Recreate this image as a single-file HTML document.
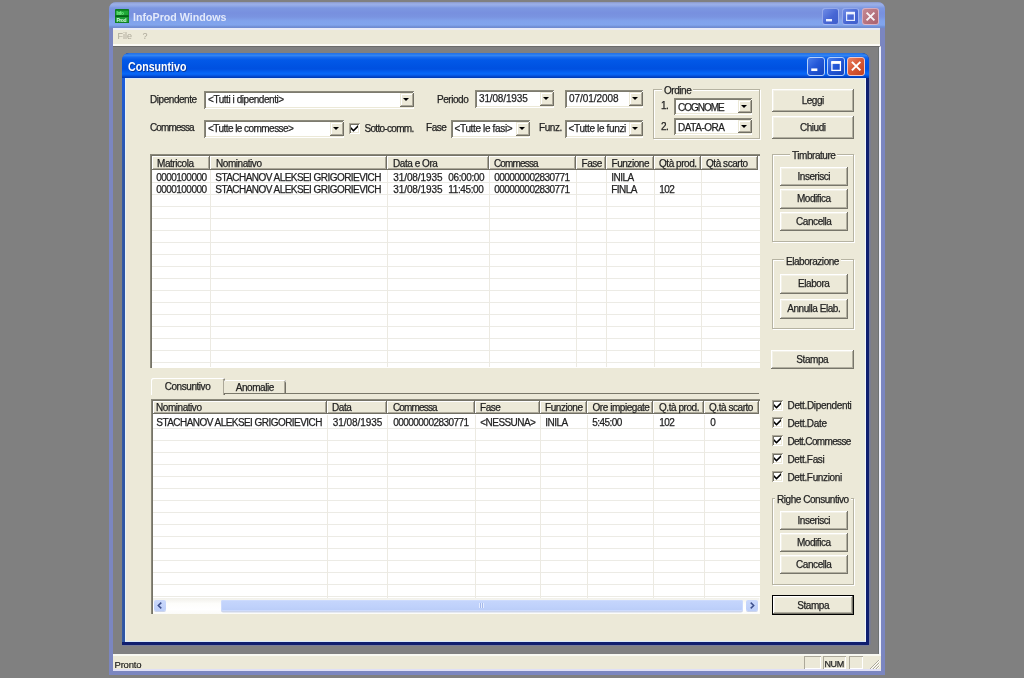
<!DOCTYPE html>
<html lang="it">
<head>
<meta charset="utf-8">
<title>InfoProd Windows - Consuntivo</title>
<style>
*{box-sizing:border-box;margin:0;padding:0}
html,body{width:1024px;height:678px;overflow:hidden;background:#808080}
body{position:relative;font-family:"Liberation Sans",sans-serif;font-size:10px;color:#1a1a1a;letter-spacing:-0.45px;line-height:12px;-webkit-text-stroke:0.25px #2a2a2a}
.a{position:absolute;white-space:nowrap}
/* outer window */
#ow{left:109px;top:2px;width:775.6px;height:672.7px;background:#7b86c0;border-radius:7px 7px 0 0}
#ot{left:109px;top:2px;width:775.6px;height:26px;border-radius:7px 7px 0 0;background:linear-gradient(#8a98c8 0,#9bb0e8 2px,#90a8e6 4px,#7c97e1 6px,#7890df 11px,#7a94e1 15px,#80a3ec 19px,#81a5ed 23px,#6f8cd2 25px,#6f8cd2 26px)}
#otx{-webkit-text-stroke:0;left:132.5px;top:10px;font-size:11.5px;font-weight:bold;color:#e3e9fb;letter-spacing:0;line-height:14px;transform:scaleX(0.927);transform-origin:0 0}
#menu{left:113px;top:28px;width:767px;height:18px;background:#ece9d8;border-top:2px solid #e9ecf7;border-bottom:2px solid #fbfaf5}
#mdi{left:113px;top:46px;width:768px;height:608px;background:#808081;border-top:1px solid #6a6a6a;border-right:2px solid #eef0fb;box-shadow:inset -1px 0 0 #6e7272}
#sb{left:113px;top:653.7px;width:768px;height:17px;background:#ece9d8;border-top:2px solid #f8f8f1;border-bottom:2px solid #dfdff6}
.mi{-webkit-text-stroke:0;color:#aca899;font-size:9px;top:30.2px;letter-spacing:0}
/* inner window */
#iw{left:121.5px;top:53px;width:747.5px;height:592.2px;background:linear-gradient(to bottom,#1a5cdc 25px,rgba(26,92,220,0) 120px) 0 0/4px 100% no-repeat,linear-gradient(to top,#0f1e6e 3.4px,rgba(15,30,110,0) 3.4px),linear-gradient(to right,#3a5fa8 0,#2f55a2 1px,#2f55a2 4px,#0f1e6e 4px);border-radius:7px 7px 0 0;box-shadow:2px 0 0 -0.5px rgba(112,120,170,.75),0 1.5px 0 -0.5px rgba(112,120,170,.6)}
#it{left:121.5px;top:53px;width:747.5px;height:25px;border-radius:7px 7px 0 0;background:linear-gradient(#2a6ee0 0,#2478ee 1px,#3384f2 2.5px,#1568ee 4.5px,#0359e8 7px,#0054e3 12px,#0050e0 16px,#0560f2 19px,#0868f8 21px,#0550dc 23px,#0040c0 24px,#003cb8 25px)}
#itx{-webkit-text-stroke:0;left:128px;top:60px;font-size:12.5px;font-weight:bold;color:#fff;letter-spacing:0;line-height:14px;text-shadow:1px 1px 0 rgba(10,36,106,.65);transform:scaleX(0.85);transform-origin:0 0}
#ic{left:125.4px;top:78px;width:740.8px;height:563.7px;background:#ece9d8;border-top:1.6px solid #dce8f8;border-left:1.7px solid #e6f2f8;border-right:1.2px solid #f2f7ff;border-bottom:1.8px solid #d8e8fa}
/* caption buttons */
.cb{width:17px;height:17px;border-radius:3px;border:1px solid #fff}
.cbo{border-color:rgba(215,225,255,.55);background:linear-gradient(135deg,#6f8ce6,#4766d4 55%,#3f5fcc)}
.cbo.x{background:linear-gradient(135deg,#c58892,#a9606e);border-color:rgba(240,215,235,.6)}
.cbi{border-color:#b4d0fa;background:linear-gradient(135deg,#4a7eec,#2458d8 45%,#1443bc)}
.cbi.x{border-color:#f0c8c8;background:linear-gradient(135deg,#ea8466,#d85a38 45%,#c4401e)}
.cb svg{position:absolute;left:0;top:0;width:15px;height:15px}
/* controls */
.sunk{background:#fff;box-shadow:inset 1px 1px 0 #8b897b,inset -1px -1px 0 #fff,inset 2px 2px 0 #7d7b6f,inset -2px -2px 0 #ece9d8}
.btn{background:#ece9d8;text-align:center;box-shadow:inset -1px -1px 0 #77756a,inset 1px 1px 0 #fff,inset -2px -2px 0 #b2afa0,inset 2px 2px 0 #f3f1e7}
.btn.def{border:1px solid #000}
.dd{background:#ece9d8;width:14px;box-shadow:inset -1px -1px 0 #716f64,inset 1px 1px 0 #ece9d8,inset -2px -2px 0 #aca899,inset 2px 2px 0 #fff}
.dd:after{content:"";position:absolute;left:3.4px;top:5.3px;border:3.6px solid transparent;border-top:3.9px solid #000;border-bottom:0}
.grp{border:1px solid #b6b3a2;box-shadow:1px 1px 0 #fff,inset 1px 1px 0 #fff}
.gl{background:#ece9d8;padding:0 2px;margin-top:0.6px}
.chk{width:11px;height:11px;background:#fff;box-shadow:inset 1px 1px 0 #aca899,inset -1px -1px 0 #fff,inset 2px 2px 0 #716f64,inset -2px -2px 0 #ece9d8}
.chk svg{position:absolute;left:2px;top:2px;width:7px;height:7px}
/* grids */
.grid{background-color:#fff;box-shadow:inset 1px 1px 0 #8b897b,inset 2px 2px 0 #757367,inset -1px -1px 0 #fbfaf6}
.rows{background-image:repeating-linear-gradient(#fff 0,#fff 11px,#ecebe5 11px,#ecebe5 12px)}
.hd{background:#ece9d8;height:13.5px;line-height:15.5px;padding-left:5px;box-shadow:inset -1px -1px 0 #716f64,inset 1px 1px 0 #fff,inset -2px -2px 0 #aca899}
.vl{width:1px;background:#eceae2}
.tx{margin-top:0.5px;margin-left:0.3px;line-height:12px;letter-spacing:-0.55px}
</style>
</head>
<body><div id="root" style="position:absolute;left:0;top:0;width:1024px;height:678px;will-change:transform">
<!-- OUTER WINDOW -->
<div class="a" id="ow"></div>
<div class="a" id="ot"></div>
<div class="a" id="menu"></div>
<div class="a" id="mdi"></div>
<div class="a" id="sb"></div>
<svg class="a" style="left:114.8px;top:9.2px;width:14.2px;height:14.3px" viewBox="0 0 14 14"><rect width="14" height="14" rx="1" fill="#0c7a20"/><rect x="0.8" y="1.6" width="12.4" height="4.6" fill="#1fa838"/><rect x="0.8" y="6.2" width="12.4" height="1.6" fill="#076016"/><rect x="0.8" y="7.8" width="12.4" height="5.2" fill="#1a9c34"/><text x="1.6" y="5.8" font-size="4.6" font-weight="bold" fill="#7cf08c" font-family="Liberation Sans, sans-serif">Info</text><text x="1.4" y="12.4" font-size="5" font-weight="bold" fill="#d6fadc" font-family="Liberation Sans, sans-serif">Prod</text></svg>
<div class="a" id="otx">InfoProd Windows</div>
<div class="a mi" style="left:117.5px">File</div>
<div class="a mi" style="left:142.5px">?</div>
<div class="a cb cbo" style="left:822px;top:8px"><svg viewBox="0 0 15 15"><rect x="3" y="10" width="6" height="2.4" fill="#eef2ff"/></svg></div>
<div class="a cb cbo" style="left:842px;top:8px"><svg viewBox="0 0 15 15"><rect x="3.6" y="4" width="7.8" height="7.4" fill="none" stroke="#e6ecff" stroke-width="1.2"/><rect x="3" y="2.8" width="9" height="2.6" fill="#eef2ff"/></svg></div>
<div class="a cb cbo x" style="left:861.5px;top:8px"><svg viewBox="0 0 15 15"><path d="M3.6 3.6 L11.4 11.4 M11.4 3.6 L3.6 11.4" stroke="#f8f2f6" stroke-width="1.9" fill="none"/></svg></div>
<div class="a" style="left:114.5px;top:659px;font-size:9.5px;color:#111;letter-spacing:-0.2px;-webkit-text-stroke:0.15px #222">Pronto</div>
<div class="a" style="left:804px;top:656px;width:17px;height:13px;box-shadow:inset 1px 1px 0 #aca899,inset -1px -1px 0 #fff"></div>
<div class="a" style="left:823px;top:656px;width:23px;height:13px;box-shadow:inset 1px 1px 0 #aca899,inset -1px -1px 0 #fff;font-size:9px;line-height:16px;padding-left:1.5px;letter-spacing:-0.4px;color:#222">NUM</div>
<div class="a" style="left:849px;top:656px;width:14px;height:13px;box-shadow:inset 1px 1px 0 #aca899,inset -1px -1px 0 #fff"></div>
<svg class="a" style="left:868px;top:658px;width:12px;height:12px" viewBox="0 0 12 12"><path d="M11 2 L2 11 M11 5 L5 11 M11 8 L8 11" stroke="#aca899" stroke-width="1"/><path d="M12 2 L3 11 M12 5 L6 11 M12 8 L9 11" stroke="#fff" stroke-width="1"/></svg>
<!-- INNER WINDOW -->
<div class="a" id="iw"></div>
<div class="a" id="it"></div>
<div class="a" id="ic"></div>
<div class="a" id="itx">Consuntivo</div>
<div class="a cb cbi" style="left:807px;top:57.4px;width:18.3px;height:18.3px"><svg viewBox="0 0 15 15" style="width:16.3px;height:16.3px"><rect x="3" y="9.6" width="5.6" height="2.4" fill="#fff"/></svg></div>
<div class="a cb cbi" style="left:827px;top:57.4px;width:18.3px;height:18.3px"><svg viewBox="0 0 15 15" style="width:16.3px;height:16.3px"><rect x="3.6" y="4" width="7.8" height="7.4" fill="none" stroke="#fff" stroke-width="1.2"/><rect x="3" y="2.8" width="9" height="2.6" fill="#fff"/></svg></div>
<div class="a cb cbi x" style="left:846.5px;top:57.4px;width:18.3px;height:18.3px"><svg viewBox="0 0 15 15" style="width:16.3px;height:16.3px"><path d="M3.6 3.6 L11.4 11.4 M11.4 3.6 L3.6 11.4" stroke="#fff" stroke-width="1.85" fill="none"/></svg></div>
<div class="a" style="left:150px;top:94px">Dipendente</div>
<div class="a sunk" style="left:204px;top:91px;width:210px;height:18px;padding:3px 0 0 4px">&lt;Tutti i dipendenti&gt;</div>
<div class="a dd" style="left:399.5px;top:93px;height:14px"></div>
<div class="a" style="left:437px;top:94px">Periodo</div>
<div class="a sunk" style="left:475px;top:89.5px;width:79px;height:18px;padding:3px 0 0 4px;letter-spacing:-0.15px">31/08/1935</div>
<div class="a dd" style="left:539.5px;top:91.5px;height:14px"></div>
<div class="a sunk" style="left:565px;top:89.5px;width:78px;height:18px;padding:3px 0 0 4px;letter-spacing:-0.05px">07/01/2008</div>
<div class="a dd" style="left:628.5px;top:91.5px;height:14px"></div>
<div class="a" style="left:150px;top:122px;letter-spacing:-0.85px">Commessa</div>
<div class="a sunk" style="left:204px;top:119.5px;width:140px;height:18px;padding:3px 0 0 4px;letter-spacing:-0.55px">&lt;Tutte le commesse&gt;</div>
<div class="a dd" style="left:329.5px;top:121.5px;height:14px"></div>
<div class="a chk" style="left:349px;top:123px"><svg viewBox="0 0 7 7"><path d="M0 2 L2.5 4.5 L7 0 L7 2.2 L2.5 6.7 L0 4.2 Z" fill="#000"/></svg></div>
<div class="a" style="left:364.5px;top:123px;letter-spacing:-0.7px">Sotto-comm.</div>
<div class="a" style="left:426px;top:122px">Fase</div>
<div class="a sunk" style="left:451px;top:119.5px;width:79px;height:18px;padding:3px 0 0 3.5px;letter-spacing:-0.35px">&lt;Tutte le fasi&gt;</div>
<div class="a dd" style="left:515.5px;top:121.5px;height:14px"></div>
<div class="a" style="left:539px;top:122px">Funz.</div>
<div class="a sunk" style="left:565px;top:119.5px;width:78px;height:18px;padding:3px 0 0 3.5px;letter-spacing:-0.35px;overflow:hidden">&lt;Tutte le funzi</div>
<div class="a dd" style="left:628.5px;top:121.5px;height:14px"></div>
<div class="a grp" style="left:653px;top:89px;width:106.5px;height:49.5px"></div>
<div class="a gl" style="left:662px;top:84px">Ordine</div>
<div class="a" style="left:661px;top:100px">1.</div>
<div class="a sunk" style="left:674px;top:97.5px;width:78px;height:17px;padding:4px 0 0 4px;letter-spacing:-1px">COGNOME</div>
<div class="a dd" style="left:737.5px;top:99.5px;height:13px"></div>
<div class="a" style="left:661px;top:121px">2.</div>
<div class="a sunk" style="left:674px;top:118px;width:78px;height:17px;padding:4px 0 0 4px">DATA-ORA</div>
<div class="a dd" style="left:737.5px;top:120px;height:13px"></div>
<div class="a btn" style="left:771.5px;top:89.3px;width:82.5px;height:23.2px;line-height:24.5px">Leggi</div>
<div class="a btn" style="left:771.5px;top:116px;width:82.5px;height:23.3px;line-height:24.5px">Chiudi</div>
<div class="a grp" style="left:772px;top:154px;width:81.5px;height:87.5px"></div>
<div class="a gl" style="left:790px;top:149px">Timbrature</div>
<div class="a btn" style="left:779.5px;top:167px;width:68.5px;height:19px;line-height:20px">Inserisci</div>
<div class="a btn" style="left:779.5px;top:189px;width:68.5px;height:19.5px;line-height:20px">Modifica</div>
<div class="a btn" style="left:779.5px;top:211.5px;width:68.5px;height:19px;line-height:20px">Cancella</div>
<div class="a grp" style="left:772px;top:258.7px;width:81.5px;height:70.8px"></div>
<div class="a gl" style="left:784px;top:255px">Elaborazione</div>
<div class="a btn" style="left:779.5px;top:274px;width:68.5px;height:19.5px;line-height:20px">Elabora</div>
<div class="a btn" style="left:779.5px;top:299px;width:68.5px;height:19.5px;line-height:20px">Annulla Elab.</div>
<div class="a btn" style="left:771px;top:349.5px;width:82.5px;height:19.5px;line-height:20.5px">Stampa</div>
<div class="a chk" style="left:772px;top:400px"><svg viewBox="0 0 7 7"><path d="M0 2 L2.5 4.5 L7 0 L7 2.2 L2.5 6.7 L0 4.2 Z" fill="#000"/></svg></div><div class="a" style="left:787.5px;top:400px;letter-spacing:-0.33px">Dett.Dipendenti</div>
<div class="a chk" style="left:772px;top:417px"><svg viewBox="0 0 7 7"><path d="M0 2 L2.5 4.5 L7 0 L7 2.2 L2.5 6.7 L0 4.2 Z" fill="#000"/></svg></div><div class="a" style="left:787.5px;top:418px;letter-spacing:-0.35px">Dett.Date</div>
<div class="a chk" style="left:772px;top:435px"><svg viewBox="0 0 7 7"><path d="M0 2 L2.5 4.5 L7 0 L7 2.2 L2.5 6.7 L0 4.2 Z" fill="#000"/></svg></div><div class="a" style="left:787.5px;top:436px;letter-spacing:-0.65px">Dett.Commesse</div>
<div class="a chk" style="left:772px;top:453px"><svg viewBox="0 0 7 7"><path d="M0 2 L2.5 4.5 L7 0 L7 2.2 L2.5 6.7 L0 4.2 Z" fill="#000"/></svg></div><div class="a" style="left:787.5px;top:454px;letter-spacing:-0.35px">Dett.Fasi</div>
<div class="a chk" style="left:772px;top:471px"><svg viewBox="0 0 7 7"><path d="M0 2 L2.5 4.5 L7 0 L7 2.2 L2.5 6.7 L0 4.2 Z" fill="#000"/></svg></div><div class="a" style="left:787.5px;top:472px;letter-spacing:-0.35px">Dett.Funzioni</div>
<div class="a grp" style="left:772px;top:498px;width:81.5px;height:87px"></div>
<div class="a gl" style="left:775px;top:493px">Righe Consuntivo</div>
<div class="a btn" style="left:779.5px;top:511px;width:68.5px;height:19px;line-height:20px">Inserisci</div>
<div class="a btn" style="left:779.5px;top:533px;width:68.5px;height:19px;line-height:20px">Modifica</div>
<div class="a btn" style="left:779.5px;top:555px;width:68.5px;height:19px;line-height:20px">Cancella</div>
<div class="a btn def" style="left:772px;top:595px;width:82.3px;height:19.7px;line-height:19px">Stampa</div>
<div class="a grid" style="left:150px;top:154px;width:610px;height:214.2px"></div>
<div class="a rows" style="left:152px;top:171.2px;width:607.5px;height:196.5px;background-size:100% 12px"></div>
<div class="a vl" style="left:210px;top:170px;height:197px"></div>
<div class="a vl" style="left:387px;top:170px;height:197px"></div>
<div class="a vl" style="left:488.5px;top:170px;height:197px"></div>
<div class="a vl" style="left:576px;top:170px;height:197px"></div>
<div class="a vl" style="left:605.7px;top:170px;height:197px"></div>
<div class="a vl" style="left:654px;top:170px;height:197px"></div>
<div class="a vl" style="left:701px;top:170px;height:197px"></div>
<div class="a hd" style="left:152px;top:156px;width:58px;padding-left:5px">Matricola</div>
<div class="a hd" style="left:210px;top:156px;width:177px;padding-left:6px">Nominativo</div>
<div class="a hd" style="left:387px;top:156px;width:101.5px;padding-left:6px">Data e Ora</div>
<div class="a hd" style="left:488.5px;top:156px;width:87.5px;padding-left:5.5px;letter-spacing:-0.85px">Commessa</div>
<div class="a hd" style="left:576px;top:156px;width:29.7px;padding-left:5.5px">Fase</div>
<div class="a hd" style="left:605.7px;top:156px;width:48.3px;padding-left:5.8px">Funzione</div>
<div class="a hd" style="left:654px;top:156px;width:47px;padding-left:5px">Qtà prod.</div>
<div class="a hd" style="left:701px;top:156px;width:57px;padding-left:5px">Qtà scarto</div>
<div class="a tx" style="left:156px;top:171px">0000100000</div>
<div class="a tx" style="left:215px;top:171px">STACHANOV ALEKSEI GRIGORIEVICH</div>
<div class="a tx" style="left:393px;top:171px"><span style="letter-spacing:-0.1px">31/08/1935</span><span style="letter-spacing:-0.4px;margin-left:6px">06:00:00</span></div>
<div class="a tx" style="left:494px;top:171px">000000002830771</div>
<div class="a tx" style="left:611px;top:171px">INILA</div>
<div class="a tx" style="left:156px;top:183px">0000100000</div>
<div class="a tx" style="left:215px;top:183px">STACHANOV ALEKSEI GRIGORIEVICH</div>
<div class="a tx" style="left:393px;top:183px"><span style="letter-spacing:-0.1px">31/08/1935</span><span style="letter-spacing:-0.4px;margin-left:6px">11:45:00</span></div>
<div class="a tx" style="left:494px;top:183px">000000002830771</div>
<div class="a tx" style="left:611px;top:183px">FINLA</div>
<div class="a tx" style="left:659px;top:183px">102</div>
<div class="a" style="left:224px;top:392.6px;width:534.5px;height:1px;background:#7a786a"></div>
<div class="a" style="left:150.5px;top:377.5px;width:74px;height:17px;background:#ece9d8;text-align:center;line-height:18px;border-radius:2px 2px 0 0;box-shadow:inset 1px 1px 0 #fff,inset -1px 0 0 #716f64,inset -2px 0 0 #aca899">Consuntivo</div>
<div class="a" style="left:224px;top:379.5px;width:61.5px;height:13px;background:#ece9d8;text-align:center;line-height:16px;border-radius:2px 2px 0 0;box-shadow:inset 0 1px 0 #fff,inset -1px 0 0 #716f64,inset -2px 0 0 #aca899">Anomalie</div>
<div class="a grid" style="left:151px;top:399.2px;width:609px;height:215.2px"></div>
<div class="a rows" style="left:153px;top:416.8px;width:606.5px;height:181.5px;background-size:100% 12px"></div>
<div class="a vl" style="left:327px;top:415px;height:183.6px"></div>
<div class="a vl" style="left:387px;top:415px;height:183.6px"></div>
<div class="a vl" style="left:474.5px;top:415px;height:183.6px"></div>
<div class="a vl" style="left:540px;top:415px;height:183.6px"></div>
<div class="a vl" style="left:586.7px;top:415px;height:183.6px"></div>
<div class="a vl" style="left:653px;top:415px;height:183.6px"></div>
<div class="a vl" style="left:704px;top:415px;height:183.6px"></div>
<div class="a hd" style="left:153px;top:401.2px;height:13.3px;line-height:14px;width:174px;padding-left:3px">Nominativo</div>
<div class="a hd" style="left:327px;top:401.2px;height:13.3px;line-height:14px;width:60px;padding-left:5px">Data</div>
<div class="a hd" style="left:387px;top:401.2px;height:13.3px;line-height:14px;width:87.5px;padding-left:6px;letter-spacing:-0.85px">Commessa</div>
<div class="a hd" style="left:474.5px;top:401.2px;height:13.3px;line-height:14px;width:65.5px;padding-left:5.5px">Fase</div>
<div class="a hd" style="left:540px;top:401.2px;height:13.3px;line-height:14px;width:46.7px;padding-left:5px">Funzione</div>
<div class="a hd" style="left:586.7px;top:401.2px;height:13.3px;line-height:14px;width:66.3px;padding-left:5.8px">Ore impiegate</div>
<div class="a hd" style="left:653px;top:401.2px;height:13.3px;line-height:14px;width:51px;padding-left:6px">Q.tà prod.</div>
<div class="a hd" style="left:704px;top:401.2px;height:13.3px;line-height:14px;width:54.5px;padding-left:5px">Q.tà scarto</div>
<div class="a tx" style="left:156px;top:416px">STACHANOV ALEKSEI GRIGORIEVICH</div>
<div class="a tx" style="left:332.5px;top:416px;letter-spacing:-0.05px">31/08/1935</div>
<div class="a tx" style="left:393px;top:416px">000000002830771</div>
<div class="a tx" style="left:480px;top:416px">&lt;NESSUNA&gt;</div>
<div class="a tx" style="left:545px;top:416px">INILA</div>
<div class="a tx" style="left:592px;top:416px">5:45:00</div>
<div class="a tx" style="left:659px;top:416px">102</div>
<div class="a tx" style="left:710px;top:416px">0</div>
<div class="a" style="left:153px;top:598px;width:606px;height:15.8px;background:linear-gradient(#f1f0ea,#fdfdfb 35%,#fff 70%,#fbfbf8)"></div>
<div class="a" style="left:221px;top:600px;width:521.5px;height:11px;border-radius:2px;background:linear-gradient(#c6d6fc,#bfd1fb 60%,#b9ccf8);box-shadow:0 1.5px 0 #cdd5ea,inset 0 0 0 1px #cddbfd"></div>
<div class="a" style="left:479px;top:603px;width:1px;height:5px;background:#e4ecff;box-shadow:2px 0 0 #e4ecff,4px 0 0 #e4ecff,1px 0 0 #a4b8ea,3px 0 0 #a4b8ea"></div>
<div class="a" style="left:154px;top:600px;width:12px;height:11.3px;border-radius:2px;background:linear-gradient(#cbd9fc,#bccef9);box-shadow:0 1px 0 #cdd5ea"></div>
<svg class="a" style="left:154px;top:600px;width:12px;height:11px" viewBox="0 0 12 11"><path d="M7.3 2.6 L4.3 5.5 L7.3 8.4" stroke="#3d4f8c" stroke-width="1.5" fill="none"/></svg>
<div class="a" style="left:745.7px;top:600px;width:12.4px;height:11.3px;border-radius:2px;background:linear-gradient(#cbd9fc,#bccef9);box-shadow:0 1px 0 #cdd5ea"></div>
<svg class="a" style="left:746px;top:600px;width:12px;height:11px" viewBox="0 0 12 11"><path d="M4.7 2.6 L7.7 5.5 L4.7 8.4" stroke="#3d4f8c" stroke-width="1.5" fill="none"/></svg>
</div></body>
</html>
